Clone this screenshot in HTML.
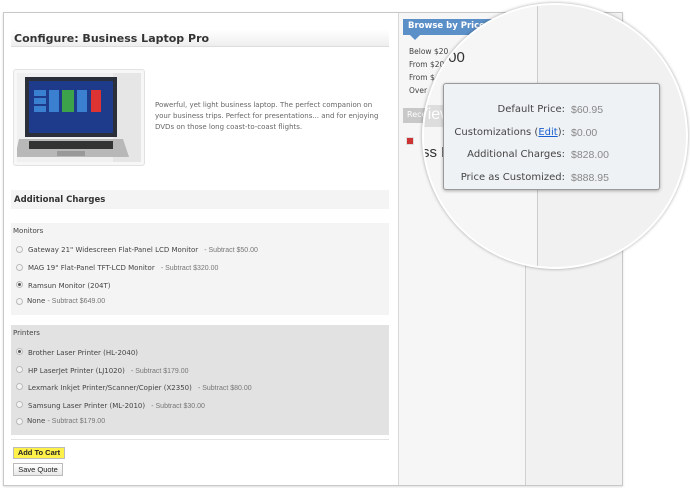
<!DOCTYPE html>
<html><head><meta charset="utf-8"><style>
*{margin:0;padding:0;box-sizing:border-box}
body{width:690px;height:488px;background:#fff;position:relative;overflow:hidden;font-family:"DejaVu Sans","Liberation Sans",sans-serif;color:#333}
.abs{position:absolute}
.frame{left:3px;top:12px;width:620px;height:474px;border:1px solid #c8c8c8;background:#fff;box-shadow:0 1px 2px #ddd}
.small{font-size:7px;color:#444}
.sub{font-family:"Liberation Sans",sans-serif;font-size:7px;color:#777}
.radio{width:7px;height:7px;border-radius:50%;border:1px solid #bbb;background:#f4f4f4}
.radio.on::after{content:"";position:absolute;left:1px;top:1px;width:3px;height:3px;border-radius:50%;background:#555}
</style></head><body>
<div class="abs frame"></div>
<div class="abs" style="left:398px;top:13px;width:127px;height:472px;background:#f6f6f6;border-left:1px solid #d8d8d8"></div>
<div class="abs" style="left:525px;top:13px;width:97px;height:472px;background:#f1f1f1;border-left:1px solid #d0d0d0"></div>
<div class="abs" style="left:403px;top:19px;width:95px;height:16px;background:#5b8fc7;color:#fff;font-size:8.5px;font-weight:bold;padding:2px 5px">Browse by Price</div>
<div class="abs" style="left:410px;top:35px;border-left:5px solid transparent;border-right:5px solid transparent;border-top:5px solid #5b8fc7"></div>
<div class="abs small" style="left:409px;top:45px;line-height:13px;font-size:7.5px">Below $20<br>From $20<br>From $<br>Over</div>
<div class="abs" style="left:403px;top:108px;width:95px;height:15px;background:#c8c8c8;color:#fff;font-size:8px;padding:2px 4px">Recently Viewed</div>
<div class="abs" style="left:406px;top:137px;width:8px;height:8px;background:#c33;border:1px solid #ddd"></div>

<div class="abs" style="left:11px;top:30px;width:378px;height:17px;background:linear-gradient(#fff,#eee);border-bottom:1px solid #ddd;font-size:11px;font-weight:bold;color:#333;padding:2px 3px">Configure: Business Laptop Pro</div>
<div class="abs" style="left:13px;top:69px;width:132px;height:97px;border:1px solid #e2e2e2;border-radius:3px;background:#f7f7f7;padding:3px">
<svg width="124" height="89" viewBox="0 0 124 89"><rect width="124" height="89" fill="#f0f0f0"/><rect x="96" y="0" width="28" height="89" fill="#e6e6e6"/>
<path d="M8 4 L100 4 L100 64 L8 64Z" fill="#2a2f3a"/><rect x="12" y="8" width="84" height="52" fill="#1e3a8a"/>
<g fill="#3b7fd0"><rect x="17" y="17" width="12" height="6"/><rect x="17" y="25" width="12" height="6"/><rect x="17" y="33" width="12" height="6"/><rect x="32" y="17" width="10" height="22"/><rect x="45" y="17" width="12" height="22" fill="#3da34a"/><rect x="60" y="17" width="10" height="22"/><rect x="74" y="17" width="10" height="22" fill="#d33"/></g>
<path d="M2 66 L106 66 L112 84 L-2 84Z" fill="#b8b8b8"/><rect x="12" y="68" width="84" height="8" fill="#333"/><rect x="40" y="78" width="28" height="5" fill="#999"/></svg></div>
<div class="abs" style="left:155px;top:100px;width:230px;font-size:7px;line-height:11px;color:#666">Powerful, yet light business laptop. The perfect companion on your business trips. Perfect for presentations... and for enjoying DVDs on those long coast-to-coast flights.</div>
<div class="abs" style="left:11px;top:190px;width:378px;height:19px;background:#f4f4f4;font-size:8.5px;font-weight:bold;padding:5px 3px">Additional Charges</div>

<div class="abs" style="left:11px;top:223px;width:378px;height:92px;background:#f4f4f4"></div>
<div class="abs small" style="left:13px;top:227px">Monitors</div>
<div class="abs radio" style="left:16px;top:246px"></div><div class="abs small" style="left:28px;top:246px">Gateway 21" Widescreen Flat-Panel LCD Monitor <span class="sub">&nbsp; - Subtract $50.00</span></div>
<div class="abs radio" style="left:16px;top:264px"></div><div class="abs small" style="left:28px;top:264px">MAG 19" Flat-Panel TFT-LCD Monitor <span class="sub">&nbsp; - Subtract $320.00</span></div>
<div class="abs radio on" style="left:16px;top:281px"></div><div class="abs small" style="left:28px;top:282px">Ramsun Monitor (204T)</div>
<div class="abs radio" style="left:16px;top:298px"></div><div class="abs small" style="left:27px;top:297px">None <span class="sub">- Subtract $649.00</span></div>

<div class="abs" style="left:11px;top:325px;width:378px;height:110px;background:#e2e2e2"></div>
<div class="abs small" style="left:13px;top:329px">Printers</div>
<div class="abs radio on" style="left:16px;top:348px"></div><div class="abs small" style="left:28px;top:349px">Brother Laser Printer (HL-2040)</div>
<div class="abs radio" style="left:16px;top:366px"></div><div class="abs small" style="left:28px;top:367px">HP LaserJet Printer (LJ1020) <span class="sub">&nbsp; - Subtract $179.00</span></div>
<div class="abs radio" style="left:16px;top:383px"></div><div class="abs small" style="left:28px;top:384px">Lexmark Inkjet Printer/Scanner/Copier (X2350) <span class="sub">&nbsp; - Subtract $80.00</span></div>
<div class="abs radio" style="left:16px;top:401px"></div><div class="abs small" style="left:28px;top:402px">Samsung Laser Printer (ML-2010) <span class="sub">&nbsp; - Subtract $30.00</span></div>
<div class="abs radio" style="left:16px;top:418px"></div><div class="abs small" style="left:27px;top:417px">None <span class="sub">- Subtract $179.00</span></div>
<div class="abs" style="left:11px;top:439px;width:378px;border-top:1px solid #e4e4e4"></div>
<div class="abs" style="left:13px;top:447px;width:52px;height:12px;background:#fff04a;border:1px solid #bbb;font-size:7.5px;font-weight:bold;font-family:'Liberation Sans',sans-serif;color:#222;text-align:center;line-height:10px">Add To Cart</div>
<div class="abs" style="left:13px;top:463px;width:50px;height:13px;background:linear-gradient(#fff,#e8e8e8);border:1px solid #bbb;font-size:7.5px;font-family:'Liberation Sans',sans-serif;color:#222;text-align:center;line-height:11px">Save Quote</div>

<div class="abs" style="left:422px;top:3px;width:266px;height:266px;border-radius:50%;overflow:hidden;border:2px solid #fff;box-shadow:0 0 3px rgba(0,0,0,.35);background:#f1f1f1">
 <div class="abs" style="left:0;top:0;width:114px;height:266px;background:#f6f6f6;border-right:1px solid #ccc"></div>
 <div class="abs" style="left:20px;top:44px;font-size:15px;color:#333;font-family:'Liberation Sans',sans-serif">.00</div>
 <div class="abs" style="left:-20px;top:100px;width:130px;height:22px;background:#ddd;color:#fff;font-size:16px;padding:1px 0 0 0;font-family:'Liberation Sans',sans-serif">&nbsp;&nbsp;&nbsp;Viewed...</div>
 <div class="abs" style="left:-2px;top:139px;font-size:15px;color:#333;font-family:'Liberation Sans',sans-serif">ss Laptop Pro</div>
 <div class="abs" style="left:56px;top:172px;font-size:14px;color:#ccc;font-family:'Liberation Sans',sans-serif">Clear List</div>
 <div class="abs" style="left:19px;top:78px;width:217px;height:107px;background:#eff2f5;border:1px solid #9a9a9a;border-radius:3px;box-shadow:0 1px 3px rgba(0,0,0,.3);font-family:'DejaVu Sans',sans-serif;font-size:10px;color:#444">
  <div class="abs" style="right:94px;top:15px;text-align:right;line-height:22.5px;white-space:nowrap">Default Price:<br>Customizations (<span style="color:#1a5fd0;text-decoration:underline">Edit</span>):<br>Additional Charges:<br>Price as Customized:</div>
  <div class="abs" style="left:127px;top:15px;line-height:22.5px;color:#888;font-family:'Liberation Sans',sans-serif;font-size:10.5px">$60.95<br>$0.00<br>$828.00<br>$888.95</div>
 </div>
</div>
</body></html>
